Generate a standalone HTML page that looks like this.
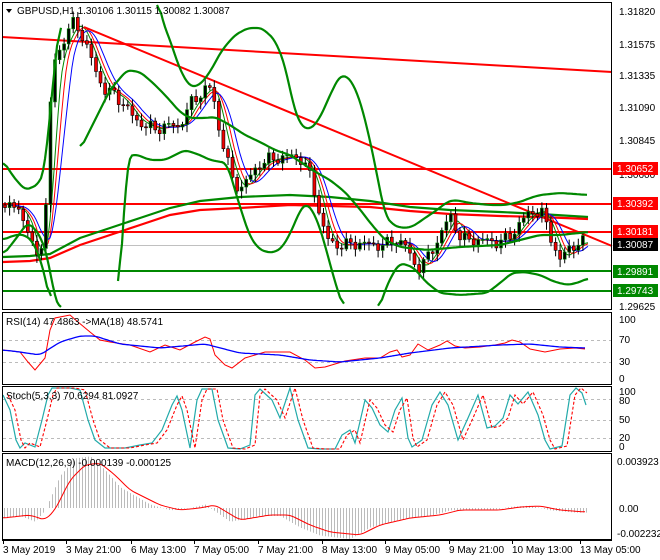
<!DOCTYPE html>
<html><head><meta charset="utf-8">
<style>
html,body{margin:0;padding:0;background:#fff;width:660px;height:560px;overflow:hidden}
svg{display:block}
text{font-family:"Liberation Sans",sans-serif;font-size:10px;fill:#000}
</style></head><body>
<svg id="s" width="660" height="560" viewBox="0 0 660 560" xmlns="http://www.w3.org/2000/svg">
<rect width="660" height="560" fill="#fff"/>
<g id="g"></g>
<rect x="2.5" y="2.5" width="609" height="307" fill="none" stroke="#000"/>
<rect x="2.5" y="312.5" width="609" height="72" fill="none" stroke="#000"/>
<rect x="2.5" y="386.5" width="609" height="65" fill="none" stroke="#000"/>
<rect x="2.5" y="453.5" width="609" height="86" fill="none" stroke="#000"/>
<line x1="2" y1="540.5" x2="612" y2="540.5" stroke="#000"/>
<path d="M6 9 L12 9 L9 13 Z" fill="#000"/>
<text x="17" y="14" font-size="11">GBPUSD,H1  1.30106 1.30115 1.30082 1.30087</text>
<text x="6" y="325">RSI(14) 47.4863  -&gt;MA(18) 48.5741</text>
<text x="6" y="399">Stoch(5,3,3) 70.6294 81.0927</text>
<text x="6" y="466">MACD(12,26,9) -0.000139 -0.000125</text>
<g font-size="10">
<text x="619" y="15">1.31820</text>
<text x="619" y="48">1.31575</text>
<text x="619" y="79">1.31335</text>
<text x="619" y="111">1.31090</text>
<text x="619" y="144">1.30845</text>
<text x="619" y="178">1.30600</text>
<text x="619" y="310">1.29625</text>
</g>
<g>
<rect x="613" y="162" width="45" height="13" fill="#f00"/><text x="617" y="172" style="fill:#fff">1.30652</text>
<rect x="613" y="197" width="45" height="13" fill="#f00"/><text x="617" y="207" style="fill:#fff">1.30392</text>
<rect x="613" y="225" width="45" height="13" fill="#f00"/><text x="617" y="235" style="fill:#fff">1.30181</text>
<rect x="613" y="238" width="45" height="13" fill="#000"/><text x="617" y="248" style="fill:#fff">1.30087</text>
<rect x="613" y="265" width="45" height="13" fill="#080"/><text x="617" y="275" style="fill:#fff">1.29891</text>
<rect x="613" y="284" width="45" height="13" fill="#080"/><text x="617" y="294" style="fill:#fff">1.29743</text>
</g>
<g font-size="10">
<text x="619" y="323">100</text><text x="619" y="343">70</text><text x="619" y="365">30</text><text x="619" y="382">0</text>
<text x="619" y="395">100</text><text x="619" y="404">80</text><text x="619" y="423">50</text><text x="619" y="441">20</text><text x="619" y="450">0</text>
<text x="617" y="465">0.003923</text><text x="619" y="512">0.00</text><text x="617" y="537">-0.002232</text>
</g>
<g font-size="10">
<text x="3" y="553">3 May 2019</text>
<text x="66" y="553">3 May 21:00</text>
<text x="131" y="553">6 May 13:00</text>
<text x="194" y="553">7 May 05:00</text>
<text x="258" y="553">7 May 21:00</text>
<text x="322" y="553">8 May 13:00</text>
<text x="385" y="553">9 May 05:00</text>
<text x="449" y="553">9 May 21:00</text>
<text x="512" y="553">10 May 13:00</text>
<text x="580" y="553">13 May 05:00</text>
</g>
</svg>
<script>
(function(){
var NS="http://www.w3.org/2000/svg",G=document.getElementById('g');
function el(t,a,p){var e=document.createElementNS(NS,t);for(var k in a)e.setAttribute(k,a[k]);(p||G).appendChild(e);return e;}
function interp(pts,x){if(x<=pts[0][0])return pts[0][1];for(var i=1;i<pts.length;i++){if(x<=pts[i][0]){var a=pts[i-1],b=pts[i];return a[1]+(b[1]-a[1])*(x-a[0])/(b[0]-a[0]);}}return pts[pts.length-1][1];}
function pl(pts,st,w,extra){var s=pts.map(function(p){return p[0].toFixed(1)+','+p[1].toFixed(1)}).join(' ');var a={points:s,fill:'none',stroke:st,'stroke-width':w};for(var k in extra)a[k]=extra[k];return el('polyline',a);}
function smooth(pts,step){var o=[];for(var x=pts[0][0];x<=pts[pts.length-1][0];x+=step)o.push([x,interp(pts,x)]);var r=[];for(var i=0;i<o.length;i++){var s=0,n=0;for(var j=-2;j<=2;j++){var k=i+j;if(k>=0&&k<o.length){s+=o[k][1];n++;}}r.push([o[i][0],s/n]);}return r;}
function clip(pts,lo,hi){return pts.map(function(p){return [p[0],Math.max(lo,Math.min(hi,p[1]))]});}
[340,362].forEach(function(v){el('line',{x1:3,x2:611,y1:v+.5,y2:v+.5,stroke:'#bbb','stroke-dasharray':'3,3'});});
[399,420,438].forEach(function(v){el('line',{x1:3,x2:611,y1:v+.5,y2:v+.5,stroke:'#bbb','stroke-dasharray':'3,3'});});
el('line',{x1:3,x2:611,y1:245.5,y2:245.5,stroke:'#c0c0c0'});
[[169,'#f00'],[204,'#f00'],[232,'#f00'],[271,'#080'],[291,'#080']].forEach(function(v){el('line',{x1:3,x2:611,y1:v[0],y2:v[0],stroke:v[1],'stroke-width':2});});
var P=[[5,205],[20,210],[30,235],[35,262],[42,240],[46,205],[50,110],[55,60],[62,45],[68,30],[75,22],[82,35],[90,55],[97,75],[105,90],[115,95],[125,105],[135,120],[145,125],[155,130],[165,125],[178,127],[185,115],[193,100],[200,95],[208,85],[213,95],[218,125],[225,150],[232,180],[240,188],[248,180],[258,165],[268,160],[278,158],[290,156],[300,158],[307,168],[313,185],[320,215],[326,238],[335,245],[345,245],[360,243],[372,245],[385,245],[398,240],[405,245],[412,260],[418,268],[425,262],[432,250],[438,240],[445,225],[452,215],[458,235],[465,240],[480,240],[495,242],[505,240],[512,235],[520,222],[528,215],[535,210],[542,213],[548,230],[555,248],[560,260],[566,252],[572,246],[580,242],[587,243]];
var UB=[[3,160],[12,175],[25,190],[38,185],[45,170],[52,90],[58,40],[62,-5]];
var UB2=[[157,-5],[162,20],[170,40],[180,70],[190,87],[200,85],[210,72],[222,50],[235,35],[248,28],[262,28],[275,40],[285,65],[292,100],[300,125],[310,130],[320,118],[330,95],[340,75],[350,78],[360,100],[370,140],[378,180],[385,215],[393,225],[402,228],[412,227],[425,218],[437,210],[447,202],[455,200],[470,203],[490,205],[505,205],[520,202],[530,198],[540,195],[560,193],[575,194],[588,195]];
var MB=[[3,255],[15,240],[28,222],[40,235],[48,258],[55,300],[62,312]];
var MB2=[[80,150],[95,120],[110,90],[127,70],[140,72],[152,82],[165,95],[180,112],[190,118],[205,118],[215,117],[230,125],[245,135],[260,142],[275,150],[290,155],[302,163],[312,170],[330,180],[345,192],[358,207],[372,225],[385,240],[400,247],[427,250],[460,247],[500,245],[520,240],[540,235],[560,235],[588,232]];
var LB=[[3,240],[12,236],[22,234],[32,240],[40,258],[46,280],[52,312]];
var LB2=[[118,312],[122,250],[125,180],[128,157],[135,154],[150,160],[165,160],[185,150],[200,155],[210,160],[227,163],[240,207],[250,237],[260,250],[272,253],[282,248],[292,230],[300,210],[307,203],[312,210],[318,222],[325,245],[333,275],[340,298],[345,312]];
var LB3=[[378,312],[385,290],[393,273],[400,263],[413,267],[427,283],[440,293],[460,295],[487,293],[500,283],[512,273],[525,272],[540,275],[555,282],[568,285],[580,282],[588,278]];
var L1=[[3,257],[30,256],[50,254],[80,238],[110,228],[140,218],[170,208],[200,201],[240,197],[290,195],[330,197],[370,201],[410,207],[450,210],[500,212],[540,214],[588,217]];
var L2=[[3,262],[30,261],[50,258],[80,245],[110,235],[140,225],[170,215],[200,210],[240,208],[290,205],[330,206],[370,207],[410,211],[450,214],[500,216],[540,217],[588,219]];
pl(L1,'#080',2.2);pl(L2,'#f00',2.2);
el('line',{x1:2,y1:37,x2:612,y2:72,stroke:'#f00','stroke-width':2});
el('line',{x1:84,y1:27,x2:612,y2:246,stroke:'#f00','stroke-width':2});
function lag(pts,d,sm){var o=[];for(var x=8;x<=588;x+=2){var s=0,n=0;for(var k=0;k<=sm;k+=2){s+=interp(pts,x-d-k);n++;}o.push([x,s/n]);}return o;}
pl(lag(P,2,10),'#080',1);pl(lag(P,3,14),'#f00',1);pl(lag(P,4,20),'#00f',1);
var bw=3,prev=interp(P,5);
for(var x=5;x<=587;x+=4.55){var c=interp(P,x)+Math.sin(x*1.7)*4+Math.cos(x*0.9)*3;var o=prev;prev=c;var t0=Math.min(o,c),b0=Math.max(o,c);if(b0-t0<1)b0=t0+1;var hi=t0-2-Math.abs(Math.sin(x*3.1))*5,lo=b0+2+Math.abs(Math.cos(x*2.3))*6;
el('line',{x1:x.toFixed(1),x2:x.toFixed(1),y1:hi.toFixed(1),y2:lo.toFixed(1),stroke:'#000','stroke-width':1});
el('rect',{x:(x-bw/2).toFixed(1),y:t0.toFixed(1),width:bw,height:(b0-t0).toFixed(1),fill:c<o?'#000':'#e00',stroke:c<o?'#080':'#000','stroke-width':.6});}
[UB,UB2,MB,MB2,LB,LB2,LB3].forEach(function(b){pl(clip(smooth(b,2),3,309),'#080',2.2);});
var R=[[3,350],[20,352],[28,362],[35,370],[45,358],[50,330],[55,318],[70,315],[78,322],[90,332],[100,340],[110,342],[130,345],[150,352],[165,345],[180,350],[195,342],[205,337],[210,339],[215,355],[225,365],[232,368],[245,358],[265,352],[290,352],[305,360],[315,368],[325,367],[335,364],[345,361],[365,358],[380,358],[390,352],[397,350],[402,357],[410,355],[418,344],[428,350],[440,345],[447,341],[455,346],[465,348],[480,347],[495,345],[505,343],[512,340],[520,342],[530,349],[545,352],[560,349],[575,348],[585,349]];
var RM=[[3,350],[20,352],[40,355],[60,342],[80,336],[95,336],[120,344],[160,348],[205,344],[240,353],[280,355],[310,360],[340,362],[380,358],[410,353],[450,348],[500,345],[530,344],[560,347],[585,348]];
pl(R,'#f00',1);pl(smooth(RM,2),'#00f',1.3);
var S=[[3,395],[10,410],[16,440],[20,448],[25,443],[35,447],[42,420],[48,395],[52,388],[70,388],[80,390],[88,420],[95,440],[105,448],[125,448],[140,445],[152,443],[162,430],[172,405],[177,396],[182,410],[190,448],[197,400],[202,389],[212,389],[218,420],[228,448],[240,449],[250,445],[255,395],[260,389],[272,400],[280,418],[290,388],[298,420],[308,448],[320,449],[335,449],[342,435],[350,430],[355,443],[365,400],[372,408],[380,425],[388,432],[395,410],[402,398],[408,438],[412,447],[422,440],[432,405],[440,392],[448,405],[458,440],[468,418],[478,395],[487,428],[495,426],[503,418],[510,395],[518,404],[528,392],[538,415],[545,440],[550,449],[562,446],[570,395],[576,388],[582,393],[586,405]];
pl(S,'#2aa',1.2);
pl(S.map(function(p){return [p[0]+5,p[1]]}).filter(function(p){return p[0]<=588}),'#f00',1.1,{'stroke-dasharray':'3,2'});
var M=[[3,518],[30,515],[45,520],[55,510],[70,480],[85,465],[100,463],[115,475],[130,490],[160,505],[180,510],[200,508],[215,505],[240,520],[270,515],[290,515],[310,525],[330,532],[360,535],[380,525],[410,518],[440,515],[460,510],[500,510],[520,507],[540,506],[560,510],[585,512]];
for(var x2=4;x2<=586;x2+=3){var h=interp(M,x2+10);var v=508+(h-508)*1.15;el('line',{x1:x2+.5,x2:x2+.5,y1:508,y2:v.toFixed(1),stroke:'#bbb','stroke-width':1});}
pl(smooth(M,2),'#f00',1);
[3,66,131,194,258,322,385,449,512,580].forEach(function(x){el('line',{x1:x+.5,x2:x+.5,y1:540,y2:544,stroke:'#000'});});
})();
</script>
</body></html>
